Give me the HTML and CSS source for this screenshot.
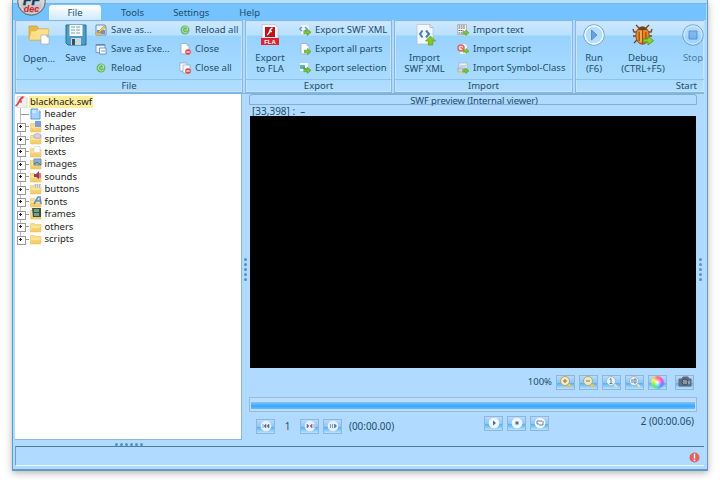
FILE: index.html
```html
<!DOCTYPE html>
<html lang="en">
<head>
<meta charset="utf-8">
<title>FFDec</title>
<link rel="stylesheet" href="styles.css">
</head>
<body>
<svg class="defs" width="0" height="0">
  <defs>
    <linearGradient id="gold" x2="0" y2="1"><stop stop-color="#fbe18e"/><stop offset="1" stop-color="#f3c961"/></linearGradient>
    <linearGradient id="silver" x2="0" y2="1"><stop stop-color="#fff"/><stop offset="1" stop-color="#aaa"/></linearGradient>
    <symbol id="folder" viewBox="0 0 12 12"><path d="M.5 2.5h4l1 1h5.5v7.5H.5z" fill="url(#gold)" stroke="#ecc56d" stroke-width=".6"/><path d="M1.5 6h8" stroke="#fff2b8"/></symbol>
    <symbol id="page" viewBox="0 0 12 12"><path d="M2 .5h6l2 2V11H2z" fill="#f8fafc" stroke="#91a4b5" stroke-width=".7"/><path d="M8 .5v2h2" fill="none" stroke="#91a4b5" stroke-width=".6"/></symbol>
    <symbol id="arrow" viewBox="0 0 8 8"><path d="M0 2.5h4V.5l4 3.6-4 3.4v-2H0z" fill="#7cc437" stroke="#4f9222" stroke-width=".6"/></symbol>
    <symbol id="reload" viewBox="0 0 12 12"><circle cx="6" cy="6" r="4.5" fill="#6cba6c"/><path d="M8.5 3.8A3 3 0 1 0 8.5 8M5.5 6H9M8.5 3.5V6" fill="none" stroke="#b9e3ae" stroke-width="1"/></symbol>
    <symbol id="no" viewBox="0 0 6 6"><circle cx="3" cy="3" r="2.8" fill="#e3434d"/><path d="M1.3 3h3.4" stroke="#fff" stroke-width="1.2"/></symbol>
  </defs>
</svg>

<div class="window">
  <div class="titlebar"></div>
  <nav class="tabs">
    <span class="tab active">File</span><span class="tab tools">Tools</span><span class="tab settings">Settings</span><span class="tab help">Help</span>
  </nav>
  <div class="ribbon">
    <section class="group g-file">
      <div class="body">
        <div class="big open"><svg width="22" height="22" viewBox="0 0 22 22"><path d="M1 2h8l2 3h9v11H1z" fill="#e9b746" stroke="#d29c39" stroke-width=".7"/><path d="M3 7h5l2-2h11l-2 11H1z" fill="#fce08a" stroke="#e3b452" stroke-width=".7"/><path d="M13 11h6l2 2v7h-8z" fill="#fff" stroke="#9caebc" stroke-width=".7"/><path d="M19 11v2h2" fill="none" stroke="#9caebc"/></svg><span>Open...</span><svg class="chev" width="7" height="4" viewBox="0 0 7 4"><path d="M.7.6 3.5 3 6.3.6" fill="none" stroke="#4780ad" stroke-width="1.2"/></svg></div>
        <div class="big save"><svg width="22" height="22" viewBox="0 0 22 22"><path d="M1 1h20v20H3l-2-2z" fill="#4d9cc4" stroke="#247099"/><path d="M4.5 1h13v11h-13z" fill="#f7fcff"/><path d="M6 3h10M6 6h10M6 9h10" stroke="#7e9caf" stroke-dasharray="4 1"/><path d="M6 14h10v7H6z" fill="#c9d8e1"/><path d="M7 15h3v6H7z" fill="#35515f"/></svg><span>Save</span></div>
        <div class="list l1">
          <div class="cmd"><svg width="12" height="12"><path d="M1 1h9l1 2v8H1z" fill="#e9f1f8" stroke="#718fae"/><path d="M2 6h8v4H2z" fill="#7692b6"/><path d="m3 8 6-6 1.5 1.5-6 5L3 9z" fill="#f8cf48" stroke="#b77f27" stroke-width=".5"/><path d="M1 9h5v2H1z" fill="#eab642"/></svg><span>Save as...</span></div>
          <div class="cmd"><svg width="12" height="12"><path d="M1 1.5h9v8H1z" fill="#edf4fa" stroke="#6d91b3" stroke-width=".8"/><path d="M1 2h9" stroke="#4d7dae" stroke-width="1.2"/><path d="M4.5 5h6.5v6H4.500zM6 8h4" fill="#fff" stroke="#5e86b1" stroke-width=".8"/></svg><span>Save as Exe...</span></div>
          <div class="cmd"><svg width="12" height="12"><use href="#reload"/></svg><span>Reload</span></div>
        </div>
        <div class="list l2">
          <div class="cmd"><svg width="12" height="12"><use href="#reload"/></svg><span>Reload all</span></div>
          <div class="cmd"><svg width="12" height="12"><use href="#page" width="12" height="12"/><use href="#no" x="6" y="6" width="6" height="6"/></svg><span>Close</span></div>
          <div class="cmd"><svg width="12" height="12"><path d="M1 1h7v8H1z" fill="#fff" stroke="#8295a7" stroke-width=".6"/><path d="M4 3h7v8H4z" fill="#f8fafc" stroke="#8295a7" stroke-width=".6"/><use href="#no" x="6" y="6" width="6" height="6"/></svg><span>Close all</span></div>
        </div>
      </div><h2>File</h2>
    </section>
    <section class="group g-export">
      <div class="body">
        <div class="big fla"><svg width="20" height="22" viewBox="0 0 20 22"><path d="M2 .5h13l3 3V14H2z" fill="#f7f7f7" stroke="#aab7c0" stroke-width=".6"/><path d="M5 3h10v10H5z" fill="#bd151d"/><path d="M12.5 4C9 4 10.5 10 7 11M9 7.5h3" fill="none" stroke="#fff" stroke-width="1.3"/><path d="M1 14h18v7H1z" fill="#d82637"/><text x="10" y="19.6" text-anchor="middle" class="fla-text">FLA</text></svg><span>Export</span><span>to FLA</span></div>
        <div class="list">
          <div class="cmd"><svg width="12" height="12"><path d="M2 1h6l2 2v7H2z" fill="#f2f5f9"/><path d="M3 3 .8 5 3 7M6 3l2 2-2 2" fill="none" stroke="#6599c7" stroke-width="1.4"/><use href="#arrow" x="4.5" y="4.5" width="7.5" height="7.5"/></svg><span>Export SWF XML</span></div>
          <div class="cmd"><svg width="12" height="12"><use href="#page" width="12" height="12"/><use href="#arrow" x="5" y="5" width="7" height="7"/></svg><span>Export all parts</span></div>
          <div class="cmd"><svg width="12" height="12"><path d="M1 1h8v8H1z" fill="#eff5f5"/><path d="M1 3h5v4H1z" fill="#66b5b2"/><use href="#arrow" x="4.5" y="4.5" width="7.5" height="7.5"/><path d="m4 5 4 3" stroke="#4a9e78" stroke-width="1.5"/></svg><span>Export selection</span></div>
        </div>
      </div><h2>Export</h2>
    </section>
    <section class="group g-import">
      <div class="body">
        <div class="big xml"><svg width="22" height="22" viewBox="0 0 22 22"><path d="M3 .5h13l3 3V20H3z" fill="#f5f8fa" stroke="#b1bec8" stroke-width=".7"/><path d="M16 .5v3h3" fill="none" stroke="#b1bec8"/><path d="M8.5 6.5 6 10l2.500 3.500M12 6.500l3 3.500-3 3.500" fill="none" stroke="#4384b9" stroke-width="2.1"/><path d="m16.500 12 5 5h-2.800v4h-4.400v-4h-2.800z" fill="#83c629" stroke="#5b991b" stroke-width=".7"/></svg><span>Import</span><span>SWF XML</span></div>
        <div class="list">
          <div class="cmd"><svg width="12" height="12"><path d="M.5.5h9v10h-9z" fill="#f3f3f3" stroke="#999" stroke-width=".6"/><path d="M1.5 2h7M1.5 4h7M1.5 6.5h5M1.5 9h4" stroke="#5f5962" stroke-width="1.2" stroke-dasharray="1.6 .7"/><use href="#arrow" x="5.5" y="5.5" width="6.5" height="6.5"/></svg><span>Import text</span></div>
          <div class="cmd"><svg width="12" height="12"><path d="M3 1h5l2 2v8H3z" fill="#eef1f4"/><circle cx="4" cy="5" r="3" fill="#f9dedb" stroke="#dc6a62" stroke-width="1.5"/><path d="m3.5 4 3 2.5" stroke="#dc6a62" stroke-width="1.4"/><use href="#arrow" x="6" y="5" width="6" height="6"/></svg><span>Import script</span></div>
          <div class="cmd"><svg width="12" height="12"><path d="M2 1h8v8H2z" fill="#edf1f5" stroke="#9bafc1" stroke-width=".6"/><path d="M3 4h6M1 6h7v4H1z" fill="#c9d5e5" stroke="#94a5b5" stroke-width=".8"/><path d="M1 9h5v2H1z" fill="#e6c779"/><use href="#arrow" x="5.5" y="5.5" width="6.5" height="6.5"/></svg><span>Import Symbol-Class</span></div>
        </div>
      </div><h2>Import</h2>
    </section>
    <section class="group g-start">
      <div class="body">
        <div class="big run"><svg width="22" height="22" viewBox="0 0 22 22"><circle cx="11" cy="11" r="10.3" fill="#cbe8ff" stroke="#6d9dc4" stroke-width=".9"/><circle cx="11" cy="11" r="9" fill="#b5ddfd" stroke="#effaff" stroke-width="1.3"/><path d="M8.5 6v10l5.5-5z" fill="#64a3dd" stroke="#417ebb" stroke-width=".7"/></svg><span>Run</span><span>(F6)</span></div>
        <div class="big debug"><svg width="22" height="22" viewBox="0 0 22 22"><path d="M7 4 4 1M14 4l3-3M5 8H2L1 5M5 12H1M5 16l-3 3M16 8h3l1-3M16 12h4" fill="none" stroke="#7b421b" stroke-width="1.4"/><ellipse cx="10.5" cy="11.5" rx="6.7" ry="8.7" fill="#e38b2c" stroke="#8f4c1b"/><path d="M6 6a4.7 4.700 0 0 1 9 0z" fill="#73411f"/><path d="M10.5 6v14M7.2 8v9M13.8 8v9" stroke="#a4490e" stroke-width="1.2"/><path d="M9 7v11" stroke="#ffc577"/><path d="M11 15h5v-3l5.500 4.700L16 21v-3h-5z" fill="#8ed02d" stroke="#4f8b20" stroke-width=".8"/></svg><span>Debug</span><span>(CTRL+F5)</span></div>
        <div class="big stop"><svg width="22" height="22" viewBox="0 0 22 22"><circle cx="11" cy="11" r="10.3" fill="#cbe8ff" stroke="#4d88c0" stroke-width="1"/><circle cx="11" cy="11" r="9" fill="#aad8fc" stroke="#d8efff" stroke-width="1"/><path d="M7 7h8v8H7z" fill="#5fa3e6" stroke="#2a72b6"/></svg><span>Stop</span></div>
      </div><h2>Start</h2>
    </section>
  </div>
  <main class="workspace">
    <aside class="left">
      <div class="tree">
        <div class="root"><svg width="13" height="12"><path d="M2 .5h8l2 2V12H2z" fill="#eee" stroke="#ccc" stroke-width=".7"/><path d="M8.500 1C4 2 4.500 8 .5 10M4 5.500h3" fill="none" stroke="#d84748" stroke-width="1.8"/></svg><span>blackhack.swf</span></div>
        <div class="node leaf"><i></i><svg width="12" height="12"><path d="M1 1h7l2 2v8H1z" fill="#a5d3ff" stroke="#5b9dda"/><path d="M2 2h4v3H2z" fill="#c7e5ff"/><path d="M8 1v2h2" fill="#fff"/></svg><span>header</span></div>
        <div class="node"><i></i><svg width="12" height="12"><use href="#folder"/><path d="M5 0h6v6H5z" fill="#7f9cd6"/></svg><span>shapes</span></div>
        <div class="node"><i></i><svg width="12" height="12"><use href="#folder"/><ellipse cx="7.500" cy="3" rx="3.800" ry="2.500" fill="#d7cbe4" stroke="#a8a2c6" stroke-width=".7"/></svg><span>sprites</span></div>
        <div class="node"><i></i><svg width="12" height="12"><use href="#folder"/><path d="M4 .5h6v6H4z" fill="#fcfcff" stroke="#ccd0d8" stroke-width=".6"/></svg><span>texts</span></div>
        <div class="node"><i></i><svg width="12" height="12"><use href="#folder"/><path d="M4 1h7v6H4z" fill="#8db3d1" stroke="#6f8bb5"/><path d="m4 6 3-2 4 3" stroke="#50785c" fill="none"/></svg><span>images</span></div>
        <div class="node"><i></i><svg width="12" height="12"><use href="#folder"/><path d="M4 3h2l3-3v8L6 6H4z" fill="#963d65"/><path d="M10 2v5" stroke="#d35b72" stroke-width="1.5"/></svg><span>sounds</span></div>
        <div class="node"><i></i><svg width="12" height="12"><use href="#folder"/><path d="M4 1h7v4H4z" fill="#d9dce0"/><path d="M5 2h6M5 4h5" stroke="#999da5" stroke-dasharray="1 1"/></svg><span>buttons</span></div>
        <div class="node"><i></i><svg width="12" height="12"><use href="#folder"/><path d="m4 8 4-7h2l1 7M6 5h5" fill="none" stroke="#5f8ed0" stroke-width="1.6"/></svg><span>fonts</span></div>
        <div class="node"><i></i><svg width="12" height="12"><use href="#folder"/><path d="M2 0h9v9H3z" fill="#3b5148"/><path d="M4 1h5v3H4zM4 5h5v3H4z" fill="#70a184"/></svg><span>frames</span></div>
        <div class="node"><i></i><svg width="12" height="12"><use href="#folder"/></svg><span>others</span></div>
        <div class="node last"><i></i><svg width="12" height="12"><use href="#folder"/></svg><span>scripts</span></div>
      </div>
      <div class="grip"><b></b><b></b><b></b><b></b><b></b><b></b></div>
    </aside>
    <div class="splitter"><b></b><b></b><b></b><b></b><b></b></div>
    <section class="preview">
      <h1>SWF preview (Internal viewer)</h1>
      <div class="coords">[33,398] :&nbsp; –</div>
      <div class="stage"></div>
      <div class="zoombar"><span>100%</span>
        <button><svg viewBox="0 0 16 12"><path d="m9 7 4 4" stroke="#e9c36a" stroke-width="2.5"/><circle cx="7" cy="5" r="4.5" fill="#f1eac7" stroke="#bda467"/><path d="M5 5h4M7 3v4" stroke="#a16f42"/></svg></button>
        <button><svg viewBox="0 0 16 12"><path d="m9 7 4 4" stroke="#e9c36a" stroke-width="2.5"/><circle cx="7" cy="5" r="4.5" fill="#e6ebcf" stroke="#bda467"/><path d="M5 5h4" stroke="#a16f42"/></svg></button>
        <button><svg viewBox="0 0 16 12"><path d="m9 7 4 4" stroke="#e3dfc4" stroke-width="2"/><circle cx="7" cy="5" r="4.5" fill="#e7f4f9" stroke="#a4bac6"/><path d="M7 2.500v5M5.500 7.500h3M5.500 3.500 7 2.500" fill="none" stroke="#3f6b89" stroke-width=".8"/></svg></button>
        <button><svg viewBox="0 0 16 12"><path d="m9 7 4 4" stroke="#e3dfc4" stroke-width="2"/><circle cx="7" cy="5" r="4.5" fill="#e7f4f9" stroke="#a4bac6"/><path d="M5 3v4M7 3h2v2M7 3v4h2V5" fill="none" stroke="#3f6b89" stroke-width=".8"/></svg></button>
        <button><em class="wheel"></em></button>
        <button class="camera"><svg viewBox="0 0 16 12"><path d="M2 3h3l1-2h5l1 2h2v7H2z" fill="#64707e" stroke="#596678"/><circle cx="8" cy="6" r="3" fill="#8b96a3" stroke="#414d5b"/><path d="M12 5v3" stroke="#ccd4da"/></svg></button>
      </div>
      <div class="progress"><div></div></div>
      <div class="player">
        <div class="framebox">
          <button><svg viewBox="0 0 16 12"><circle cx="8" cy="6" r="5.3" fill="#e7f0fa"/><path d="M5 4v4M8 4 6 6l2 2zM11 4 9 6l2 2z" fill="#596e8d" stroke="#596e8d" stroke-width=".6"/></svg></button><span class="frame">1</span>
          <button><svg viewBox="0 0 16 12"><circle cx="8" cy="6" r="5.3" fill="#e7f0fa"/><path d="M5 4v4l2-2zM10 4 8 6l2 2zM12 4v4" fill="#7e6891" stroke="#7e6891" stroke-width=".6"/></svg></button>
          <button><svg viewBox="0 0 16 12"><circle cx="8" cy="6" r="5.3" fill="#e7f0fa"/><path d="M5.500 4v4M7.500 4v4M9.500 4v4l2-2z" fill="#46789a" stroke="#46789a" stroke-width=".7"/></svg></button><span class="time">(00:00.00)</span>
        </div>
        <div class="controls">
          <button><svg viewBox="0 0 16 12"><circle cx="8" cy="6" r="5.3" fill="#f1f6fc"/><path d="m7 3.500 3 2.500-3 2.500z" fill="#41729c"/></svg></button>
          <button><svg viewBox="0 0 16 12"><circle cx="8" cy="6" r="5.3" fill="#f1f6fc"/><path d="M6.500 4.500h3v3h-3z" fill="#48759b"/></svg></button>
          <button><svg viewBox="0 0 16 12"><circle cx="8" cy="6" r="5.3" fill="#f1f6fc"/><path d="M5 7V4h5M11 4v4H7M5 7h2" fill="none" stroke="#6d8298"/></svg></button>
        </div>
        <span class="total">2 (00:00.06)</span>
      </div>
    </section>
    <div class="splitter right"><b></b><b></b><b></b><b></b><b></b></div>
  </main>
  <footer class="status"><svg width="11" height="11" viewBox="0 0 11 11"><circle cx="5.5" cy="5.5" r="5" fill="#e95f5c"/><path d="M5.500 1.800v4.700M5.500 7.500v1.700" stroke="#fff" stroke-width="1.5"/></svg></footer>
  <svg class="logo" width="29" height="29" viewBox="0 0 29 29"><circle cx="14.5" cy="14.5" r="13.8" fill="url(#silver)" stroke="#5e6975"/><circle cx="14.5" cy="14.5" r="12" fill="none" stroke="#ddd"/><text x="14.5" y="18" text-anchor="middle" class="ff">FF</text><text x="14.5" y="25" text-anchor="middle" class="dec">dec</text></svg>
</div>
</body>
</html>
```

FILE: styles.css
```css
* { box-sizing: border-box; }
body { margin: 0; width: 720px; height: 486px; overflow: hidden; background: #fff; color: #1f4d6d; font: 9.5px/12px "Noto Sans", "Open Sans", sans-serif; }
.defs { position: absolute; }
svg { display: block; flex: none; }
span { white-space: nowrap; }
h1, h2 { margin: 0; font-size: inherit; font-weight: 400; text-align: center; }

.window { position: relative; width: 696px; height: 471px; margin-left: 12px; padding: 0 3px 3px 2px; display: flex; flex-direction: column; background: #b0daff; border: solid #5a9dcb; border-width: 0 1px 2px; box-shadow: 0 2px 7px rgba(80, 60, 60, .4); }
.titlebar { height: 4px; flex: none; margin: 0 -3px 0 -2px; background: linear-gradient(#b8dffb 0 3px, #74b6e6 3px); }
.tabs { height: 16px; flex: none; display: flex; align-items: flex-end; margin: 0 -2px; background: #74c2ff; }
.tab { height: 15px; line-height: 16px; }
.active { width: 52px; margin-left: 36px; text-align: center; border-radius: 3px 3px 0 0; background: linear-gradient(#fff, #cfeaff); }
.tools { margin-left: 20px; }
.settings { margin-left: 29px; }
.help { margin-left: 30px; }

.ribbon { height: 74px; flex: none; display: flex; gap: 2px; background: #b0daff; border-bottom: 1px solid #83b4da; overflow: hidden; }
.group { flex: none; height: 73px; display: flex; flex-direction: column; border: 1px solid #88b8df; background: linear-gradient(#cce8ff, #b9e0ff 14px, #98d2ff 15px, #a9dbff 58px, #b4ddff); box-shadow: inset 0 0 0 1px #c4e4fe; }
.g-file { width: 228px; }
.g-export { width: 147px; }
.g-import { width: 179px; }
.g-start { width: 130px; }
.body { height: 58px; display: flex; padding-top: 3px; }
.group h2 { height: 13px; line-height: 12px; border-top: 1px solid #8cc3ee; }
.g-start h2 { text-align: right; padding-right: 7px; }
.big { flex: none; display: flex; flex-direction: column; align-items: center; text-align: center; line-height: 11px; }
.big svg + span { margin-top: 6px; }
.open svg + span { margin-top: 7px; }
.open .chev { margin-top: 3px; }
.open { width: 46px; }
.save { width: 27px; }
.fla { width: 48px; }
.xml { width: 59px; }
.run { width: 36px; }
.debug { width: 62px; }
.stop { width: 38px; opacity: .65; }
.list { flex: none; display: flex; flex-direction: column; gap: 7px; }
.cmd { display: flex; gap: 4px; height: 12px; align-items: center; }
.cmd span { line-height: 14px; }
.l1 { width: 84px; margin-left: 6px; }
.g-export .list { margin-left: 5px; }
.g-import .list { margin-left: 3px; }
.fla-text { font: 700 6px "Liberation Sans", sans-serif; fill: #fff; }

.workspace { flex: 1; display: flex; min-height: 0; }
.left { width: 227px; display: flex; flex-direction: column; }
.tree { height: 346px; flex: none; background: #fff; border: 1px solid #8db8da; border-left: 0; border-top: 0; padding-top: 1px; color: #222; }
.root { display: flex; height: 13px; align-items: center; gap: 1px; }
.root span { padding: 0 1px; height: 12px; line-height: 12px; background: #ffee9b; }
.node { position: relative; display: flex; height: 12.5px; align-items: center; padding-left: 2px; gap: 2px; }
.node svg { margin-left: -1px; }
.node span { margin-left: .5px; }
.node::before { content: ""; position: absolute; left: 5px; top: 0; height: 13px; border-left: 1px solid #bbb; }
.node.last::before { height: 6px; }
.node i { position: relative; width: 12px; height: 7px; background: linear-gradient(#999, #999) 7px 3px / 5px 1px no-repeat; }
.node i::before { content: ""; display: block; width: 7px; height: 7px; border: 1px solid #999; background: linear-gradient(#222, #222) 1px 2px / 3px 1px no-repeat, linear-gradient(#222, #222) 2px 1px / 1px 3px no-repeat, #fff; }
.node.leaf i { background-position: 4px 3px; background-size: 8px 1px; }
.leaf i::before { display: none; }
.grip { flex: 1; display: flex; justify-content: center; align-items: center; gap: 2px; padding-top: 2px; }
b { width: 3px; height: 3px; border-radius: 50%; background: #5790c9; }
.splitter { width: 7px; display: flex; flex-direction: column; align-items: center; justify-content: center; gap: 2px; padding-bottom: 1px; }
.preview { width: 448px; display: flex; flex-direction: column; }
.preview h1 { height: 11px; border: 1px solid #82afd6; border-radius: 3px 3px 0 0; line-height: 11px; letter-spacing: -.13px; padding-left: 2px; }
.coords { height: 11px; padding-left: 3px; line-height: 13px; font-size: 10px; }
.stage { width: 446px; height: 252px; margin-left: 1px; background: #000; flex: none; }
.zoombar { height: 30px; display: flex; align-items: center; justify-content: flex-end; gap: 4px; padding-right: 3px; }
button { flex: none; width: 19px; height: 15px; padding: 0; display: flex; align-items: center; justify-content: center; border: 1px solid #91b6d8; background: linear-gradient(#b8dbfa, #8ac8fb 50%, #55aff4 54%, #b5e4ff); }
button svg { width: 16px; height: 12px; }
.camera { margin-left: 4px; }
.wheel { width: 13px; height: 13px; border-radius: 50%; background: radial-gradient(#fff, transparent 45%), conic-gradient(#f77, #ff55da, #7878ff, #48dbe5, #76ec55, #fff45d, #f77); }
.progress { height: 15px; flex: none; padding: 4px 1px 3px; border: 1px solid #93bbdf; background: #bfddf9; }
.progress div { height: 7px; background: linear-gradient(#7fc5ff, #3ba6ff 60%, #67c0ff); }
.player { height: 36px; display: flex; align-items: flex-start; font-size: 9.9px; }
.framebox { width: 235px; padding: 7px 0 0 7px; display: flex; align-items: center; gap: 4px; }
.frame { width: 17px; text-align: center; }
.time { margin-left: 3px; }
.controls { display: flex; gap: 4px; padding-top: 4px; }
.total { margin: 3px 3px 0 auto; }
.right { width: 7px; }
.status { height: 20px; flex: none; display: flex; align-items: center; justify-content: flex-end; padding: 2px 4px 0 0; border-top: 1px solid #517b9b; border-left: 1px solid #68a0c9; border-bottom: 1px solid #e5f8ff; }
.logo { position: absolute; left: 4px; top: -13px; }
.ff { font: italic 900 14px "Liberation Sans", sans-serif; fill: #123c62; stroke: #123c62; stroke-width: .5px; }
.dec { font: italic 700 9px "Liberation Sans", sans-serif; fill: #dc1b2b; }
```
